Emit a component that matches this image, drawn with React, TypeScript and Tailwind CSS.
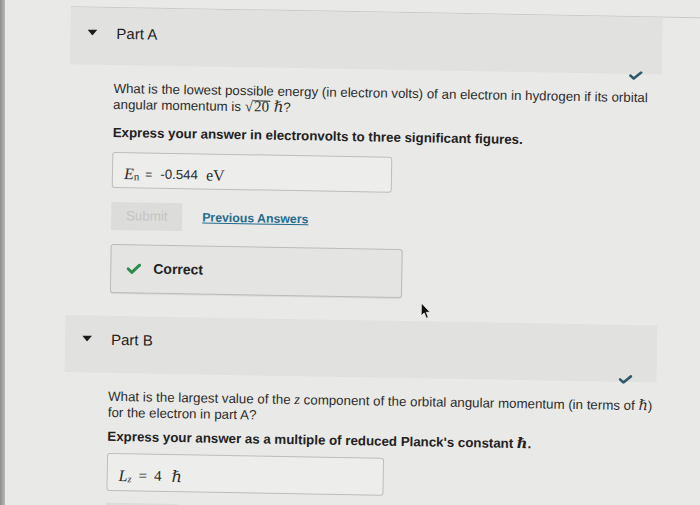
import React from "react";

function Tri() {
  return (
    <svg width="10" height="6" viewBox="0 0 10 6" className="mt-[5px] shrink-0">
      <path d="M0 0H10L5 6Z" fill="#1c1c1c" />
    </svg>
  );
}

function PartCheck() {
  return (
    <svg width="14" height="9" viewBox="0 0 14 9">
      <path d="M1.6 4.6 L5 7.6 L12.4 1.4" fill="none" stroke="#2f5a6b" strokeWidth="2.6" strokeLinecap="round" strokeLinejoin="round" />
    </svg>
  );
}

function GreenCheck() {
  return (
    <svg width="15" height="11" viewBox="0 0 15 11">
      <path d="M1.8 5.6 L5.6 9.2 L13.2 1.8" fill="none" stroke="#2e8a4f" strokeWidth="3" strokeLinecap="round" strokeLinejoin="round" />
    </svg>
  );
}

function Cursor() {
  return (
    <svg width="10" height="17" viewBox="0 0 10 17">
      <path d="M0.6 0.6 L0.6 13.5 L3.6 10.6 L5.8 15.8 L7.8 15 L5.7 9.9 L9.5 9.9 Z" fill="#111" stroke="#f2f2f2" strokeWidth="0.8" />
    </svg>
  );
}

export default function App() {
  return (
    <div className="relative flex h-[505px] w-[700px] overflow-hidden bg-[#e9e9e7] font-['Liberation_Sans',Arial,sans-serif] text-[#2b2b2b]">
      <div className="w-[5px] shrink-0 bg-gradient-to-r from-[#8e8e8e] to-[#b8b8b6]" />
      <div className="relative w-[720px] shrink-0 origin-top-left rotate-[1deg] pt-[5px]">
        {/* Part A */}
        <section className="ml-[66px] border-t border-[#cacac8]">
          <div className="flex h-[57px] w-[592px] items-start bg-[#e1e1df] pl-[17px] pt-[17px]">
            <Tri />
            <span className="ml-[19px] text-[15px] leading-[17px] text-[#1d1d1d]">Part A</span>
          </div>
          <div className="w-[592px] pl-[44px]">
            <div className="-mt-[3px] flex justify-end pr-[19px]">
              <PartCheck />
            </div>
            <p className="mt-[10px] whitespace-nowrap text-[13.3px] leading-[16px]">
              What is the lowest possible energy (in electron volts) of an electron in hydrogen if its orbital
              <br />
              angular momentum is{" "}
              <span className="font-['Liberation_Serif','DejaVu_Serif',serif] text-[15px] leading-[12px]">
                √<span className="inline-block border-t border-[#2b2b2b] px-[1px] leading-[11px]">20</span>{" "}
                <i>ℏ</i>
              </span>
              ?
            </p>
            <p className="mt-[12px] whitespace-nowrap text-[13.3px] font-bold leading-[15px] text-[#222]">
              Express your answer in electronvolts to three significant figures.
            </p>
            <div className="mt-[12px] flex h-[36px] w-[280px] items-center rounded-[3px] border border-[#bdbdbb] bg-[#ededeb] pl-[11px] pt-[7px]">
              <span className="font-['Liberation_Serif','DejaVu_Serif',serif] text-[16px] italic">E</span>
              <span className="mt-[6px] font-['Liberation_Serif','DejaVu_Serif',serif] text-[11px]">n</span>
              <span className="ml-[6px] text-[12px]">=</span>
              <span className="ml-[8px] text-[13.3px]">-0.544</span>
              <span className="ml-[8px] font-['Liberation_Serif','DejaVu_Serif',serif] text-[16px]">eV</span>
            </div>
            <div className="mt-[14px] flex items-center">
              <div className="flex h-[28px] w-[71px] items-center justify-center bg-[#dcdcda] text-[13.3px] text-[#c4c4c2]">
                Submit
              </div>
              <span className="ml-[20px] pt-[1px] text-[12.3px] font-bold text-[#236b8e] underline">
                Previous Answers
              </span>
            </div>
            <div className="mt-[14px] flex h-[49px] w-[292px] items-center rounded-[3px] border border-[#bcbcba] bg-[#e4e4e2] pl-[15px] shadow-[0_1px_1px_rgba(0,0,0,0.08)]">
              <GreenCheck />
              <span className="ml-[12px] text-[14px] font-bold text-[#222]">Correct</span>
            </div>
          </div>
        </section>

        {/* Part B */}
        <section className="ml-[66px] mt-[23px]">
          <div className="flex h-[57px] w-[592px] items-start bg-[#e1e1df] pl-[17px] pt-[15px]">
            <Tri />
            <span className="ml-[19px] text-[15px] leading-[17px] text-[#1d1d1d]">Part B</span>
          </div>
          <div className="w-[592px] pl-[44px]">
            <div className="-mt-[7px] flex justify-end pr-[24px]">
              <PartCheck />
            </div>
            <p className="mt-[13px] whitespace-nowrap text-[13.3px] leading-[16px]">
              What is the largest value of the{" "}
              <i className="font-['Liberation_Serif','DejaVu_Serif',serif] text-[14.5px]">z</i> component of the orbital angular momentum (in terms of{" "}
              <i className="font-['Liberation_Serif','DejaVu_Serif',serif] text-[14.5px]">ℏ</i>)
              <br />
              for the electron in part A?
            </p>
            <p className="mt-[8px] whitespace-nowrap text-[13.3px] font-bold leading-[15px] text-[#222]">
              Express your answer as a multiple of reduced Planck's constant{" "}
              <i className="font-['Liberation_Serif','DejaVu_Serif',serif] text-[14.5px]">ℏ</i>.
            </p>
            <div className="mt-[9px] flex h-[38px] w-[277px] items-center rounded-[3px] border border-[#bdbdbb] bg-[#ededeb] pl-[11px] pt-[7px]">
              <span className="font-['Liberation_Serif','DejaVu_Serif',serif] text-[16px] italic">L</span>
              <span className="mt-[6px] font-['Liberation_Serif','DejaVu_Serif',serif] text-[10px] italic">z</span>
              <span className="ml-[7px] font-['Liberation_Serif','DejaVu_Serif',serif] text-[15px]">=</span>
              <span className="ml-[7px] font-['Liberation_Serif','DejaVu_Serif',serif] text-[15px]">4</span>
              <span className="ml-[10px] font-['Liberation_Serif','DejaVu_Serif',serif] text-[16px] italic">ℏ</span>
            </div>
            <div className="mt-[12px] h-[28px] w-[71px] bg-[#dcdcda]" />
          </div>
        </section>

        <div className="absolute left-[421px] top-[295px]">
          <Cursor />
        </div>
      </div>
    </div>
  );
}
